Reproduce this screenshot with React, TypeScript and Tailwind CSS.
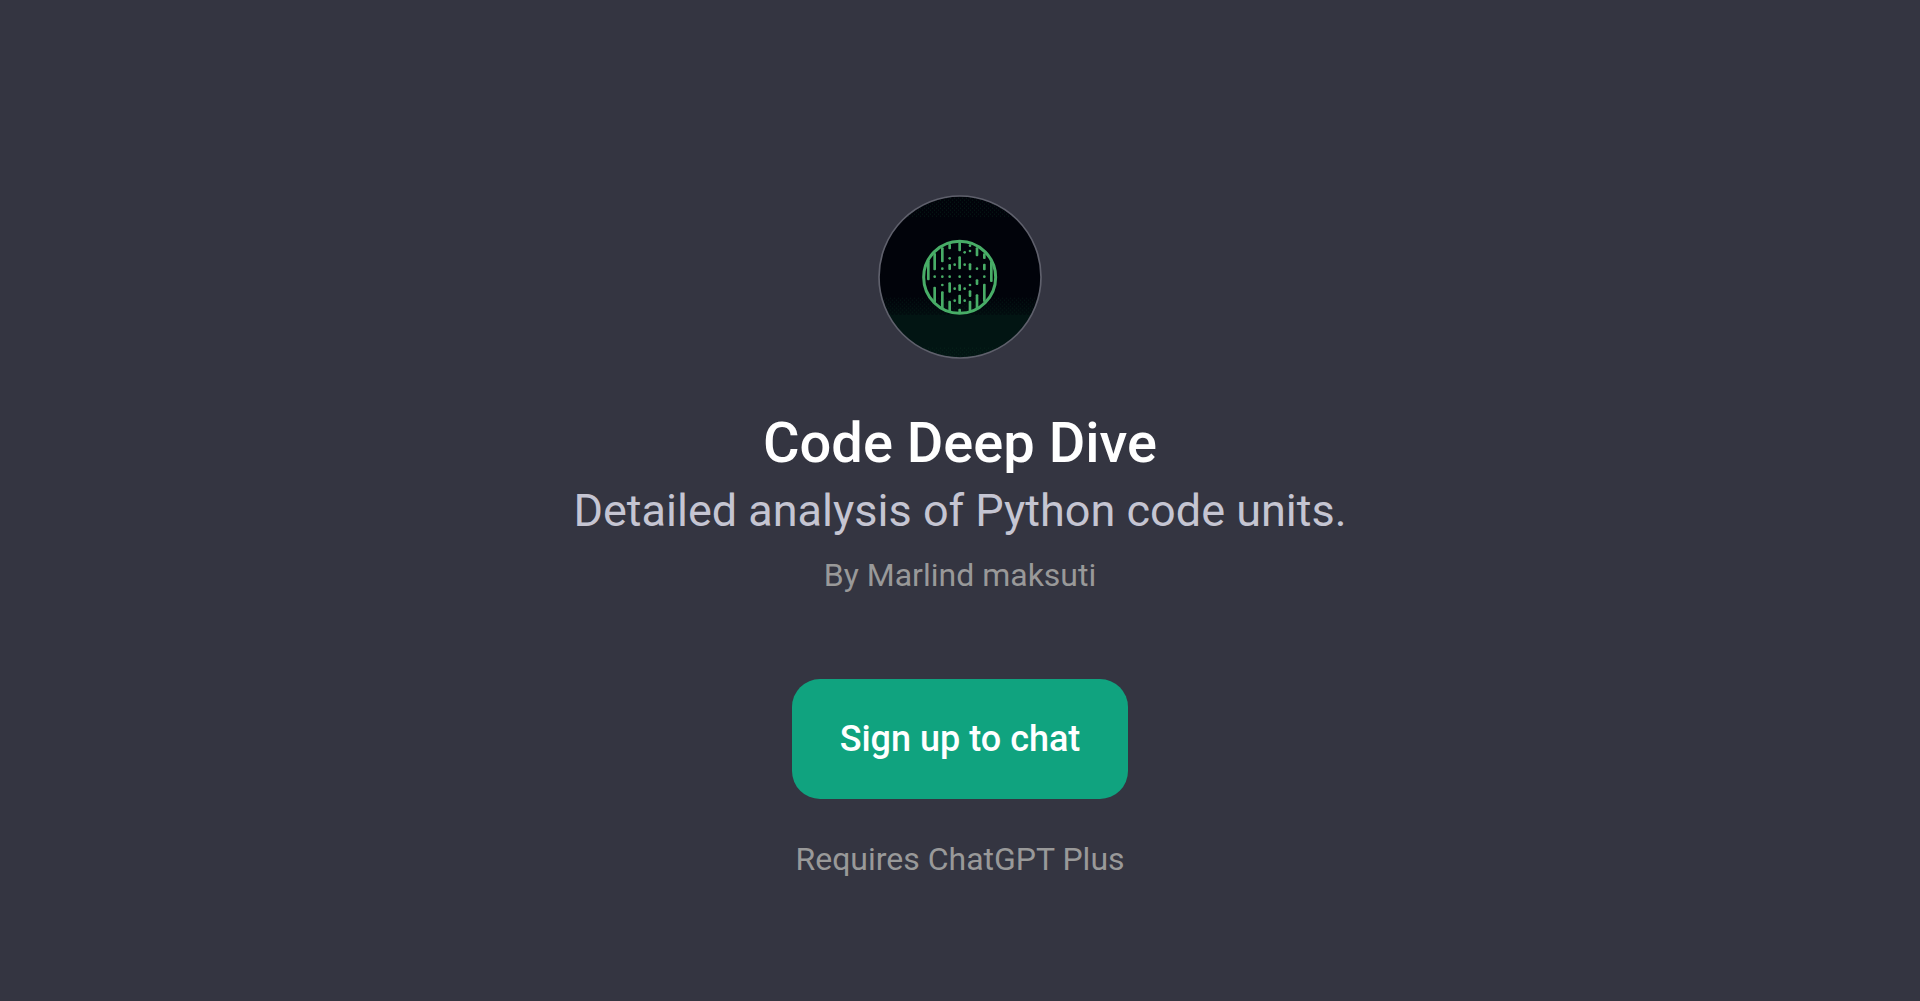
const BARS = [
  { x: 175, lines: [[225, 285]], dots: [] },
  { x: 194, lines: [[203, 255], [304, 352]], dots: [274] },
  { x: 217, lines: [[186, 231], [318, 370]], dots: [250, 274, 299] },
  { x: 239, lines: [[176, 192], [236, 254], [291, 322], [346, 380]], dots: [219, 274] },
  { x: 254, lines: [], dots: [238, 310, 346] },
  { x: 269, lines: [[170, 198], [213, 252], [297, 317], [328, 356], [370, 384]], dots: [274] },
  { x: 284, lines: [], dots: [201, 238, 310, 346] },
  { x: 300, lines: [[234, 255], [315, 335], [346, 378]], dots: [181, 197, 274, 299] },
  { x: 321, lines: [[186, 213], [282, 299], [327, 370]], dots: [250] },
  { x: 343, lines: [[204, 221], [235, 255], [295, 350]], dots: [274] },
  { x: 364, lines: [[228, 290]], dots: [] },
];

function Avatar() {
  return (
    <svg viewBox="24 28 492 492" className="size-41" role="img" aria-label="Code Deep Dive">
      <defs>
        <clipPath id="disc">
          <circle cx="270" cy="274" r="243" />
        </clipPath>
        <pattern id="grain" width="12" height="12" patternUnits="userSpaceOnUse">
          <rect width="3" height="3" fill="#062219" />
          <rect x="6" y="6" width="3" height="3" fill="#062219" />
        </pattern>
        <linearGradient id="fade" x1="0" y1="0" x2="0" y2="1">
          <stop offset="0" stopColor="#021513" stopOpacity="0" />
          <stop offset="1" stopColor="#021513" stopOpacity="0.6" />
        </linearGradient>
      </defs>
      <g clipPath="url(#disc)">
        <rect x="24" y="28" width="492" height="492" fill="#01030a" />
        <rect x="24" y="28" width="492" height="66" fill="url(#grain)" opacity="0.8" />
        <rect x="24" y="335" width="492" height="53" fill="url(#fade)" />
        <rect x="24" y="335" width="492" height="65" fill="url(#grain)" opacity="0.6" />
        <rect x="24" y="388" width="492" height="132" fill="#021513" />
        <rect x="24" y="484" width="492" height="36" fill="url(#grain)" />
      </g>
      <circle cx="270" cy="274" r="243" fill="none" stroke="#5f606c" strokeWidth="5" />
      <circle cx="269" cy="275" r="108" fill="none" stroke="#48ad67" strokeWidth="9" />
      {BARS.map((bar) => (
        <g key={bar.x} fill="#48ad67">
          {bar.lines.map(([top, bottom]) => (
            <rect key={top} x={bar.x - 4} y={top - 1} width="8" height={bottom - top} rx="3" />
          ))}
          {bar.dots.map((y) => (
            <circle key={y} cx={bar.x} cy={y - 1} r="4" />
          ))}
        </g>
      ))}
    </svg>
  );
}

export default function App() {
  return (
    <main className="min-h-screen flex flex-col items-center bg-[#343541] px-4 pt-[195px] pb-12 text-center font-['Roboto',sans-serif]">
      <Avatar />
      <h1 className="mt-12 text-[56px] leading-[72px] font-medium text-white">
        Code Deep Dive
      </h1>
      <p className="text-[45px] leading-[64px] text-[#c5c5d2]">
        Detailed analysis of Python code units.
      </p>
      <p className="mt-2 text-[32px] leading-[48px] text-[#999999]">
        By Marlind maksuti
      </p>
      <button
        type="button"
        className="mt-20 rounded-[28px] bg-[#10a37f] px-12 py-9 text-[36px] leading-[48px] font-medium text-white"
      >
        Sign up to chat
      </button>
      <p className="mt-9 text-[32px] leading-[48px] text-[#999999]">
        Requires ChatGPT Plus
      </p>
    </main>
  );
}
